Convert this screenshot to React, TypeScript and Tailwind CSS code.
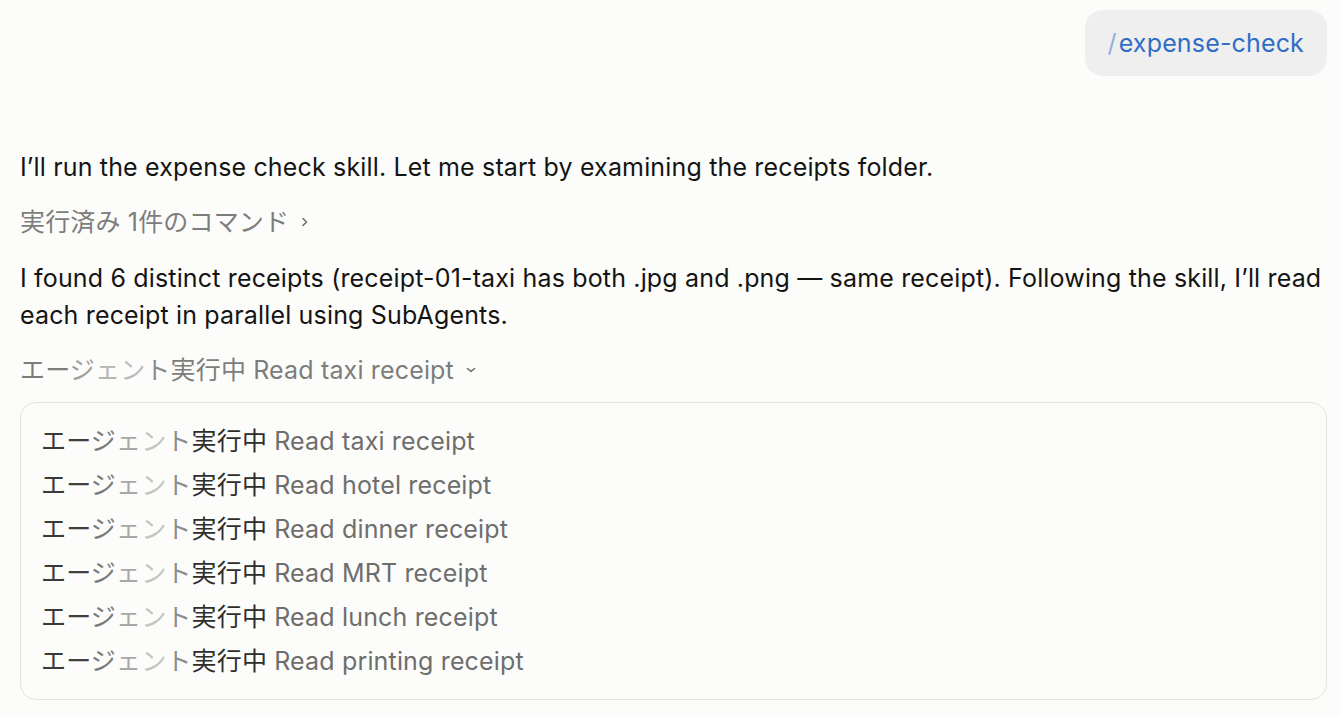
import React from "react";

const FONT = { fontFamily: "Inter, 'Noto Sans CJK JP', sans-serif" };

const shimmerDark = ["#3a3a38", "#3f3f3d", "#7a7a78", "#a8a8a6", "#c4c4c2", "#8c8c8a", "#2e2e2c", "#2e2e2c", "#2e2e2c"];
const shimmerGray = ["#7d7d7b", "#7d7d7b", "#a0a09e", "#b4b4b2", "#bdbdbb", "#8a8a88", "#7d7d7b", "#7d7d7b", "#7d7d7b"];

function Shimmer({ colors }: { colors: string[] }) {
  const chars = "エージェント実行中".split("");
  return (
    <>
      {chars.map((c, i) => (
        <span key={i} style={{ color: colors[i] }}>
          {c}
        </span>
      ))}
    </>
  );
}

const rows = ["taxi", "hotel", "dinner", "MRT", "lunch", "printing"];

export default function App() {
  return (
    <div
      className="min-h-[716px] w-full bg-[#fcfcfb] pl-[20px] pr-[13px] pt-[10px] text-[25px] leading-[36px] tracking-[0.16px] text-[#141413]"
      style={FONT}
    >
      <div className="flex justify-end">
        <div className="rounded-[18px] bg-[#efefef] px-[23px] pt-[15px] pb-[15px] text-[#2f6dc6]">
          <span className="mr-[2px] text-[#8fb0e0]">/</span>expense-check
        </div>
      </div>

      <p className="mt-[73px]">
        I’ll run the expense check skill. Let me start by examining the receipts folder.
      </p>

      <div className="mt-[19px] flex items-center text-[#7d7d7b]">
        <span>実行済み 1件のコマンド</span>
        <svg width="16" height="16" viewBox="0 0 16 16" className="ml-[8px]" fill="none">
          <path d="M6 4.5 L9.5 8 L6 11.5" stroke="#6f6f6d" strokeWidth="1.6" strokeLinecap="round" strokeLinejoin="round" />
        </svg>
      </div>

      <p className="mt-[20px] leading-[37px]">
        I found 6 distinct receipts (receipt-01-taxi has both .jpg and .png — same receipt). Following the skill, I’ll read
        each receipt in parallel using SubAgents.
      </p>

      <div className="mt-[18px] flex items-center text-[#7d7d7b]">
        <span>
          <Shimmer colors={shimmerGray} /> Read taxi receipt
        </span>
        <svg width="16" height="16" viewBox="0 0 16 16" className="ml-[9px]" fill="none">
          <path d="M4.5 6.5 L8 9.5 L11.5 6.5" stroke="#6f6f6d" strokeWidth="1.6" strokeLinecap="round" strokeLinejoin="round" />
        </svg>
      </div>

      <div className="mt-[14px] rounded-[16px] border border-[#e3e3e1] bg-[#fcfcfb] px-[20px] py-[16px]">
        {rows.map((r) => (
          <div key={r} className="leading-[44px] text-[#6e6e6c]">
            <Shimmer colors={shimmerDark} /> Read {r} receipt
          </div>
        ))}
      </div>
    </div>
  );
}
